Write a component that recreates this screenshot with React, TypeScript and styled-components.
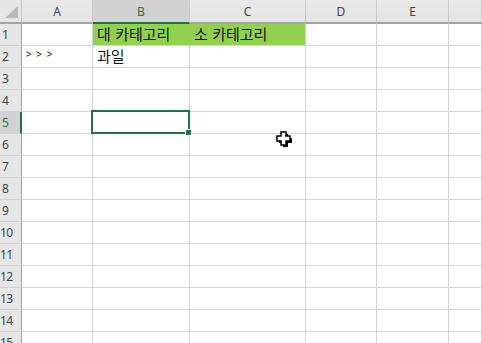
import { styled, createGlobalStyle, css } from 'styled-components'

const GlobalStyle = createGlobalStyle`
  html, body {
    margin: 0;
    padding: 0;
    background: #ffffff;
    overflow: hidden;
  }
`

const ROWS = 15
const COLUMNS = ['A', 'B', 'C', 'D', 'E', '']
const ACTIVE_COL = 'B'
const ACTIVE_ROW = 5

const Sheet = styled.div`
  display: grid;
  grid-template-columns: 22px 71px 97px 116px 71px 72px 1fr;
  grid-auto-rows: 22px;
  grid-template-rows: 24px;
  width: 482px;
  height: 343px;
  overflow: hidden;
  position: relative;
  font-family: 'Noto Sans', 'Noto Sans CJK KR', sans-serif;
  background: #ffffff;
`

const Corner = styled.div`
  background: #e6e6e6;
  border-right: 1px solid #c6c6c6;
  border-bottom: 2px solid #a3a3a3;
  box-sizing: border-box;
  position: relative;

  &::after {
    content: '';
    position: absolute;
    right: 3px;
    bottom: 4px;
    width: 0;
    height: 0;
    border-left: 13px solid transparent;
    border-bottom: 12px solid #b8b8b8;
  }
`

const ColHead = styled.div<{ $active?: boolean }>`
  display: flex;
  align-items: center;
  justify-content: center;
  box-sizing: border-box;
  font-size: 12px;
  color: #444444;
  background: linear-gradient(#e9e9e9, #e4e4e4);
  border-right: 1px solid #cacaca;
  border-bottom: 2px solid #a3a3a3;
  padding-top: 1px;

  ${({ $active }) =>
    $active &&
    css`
      background: #d2d2d2;
      color: #217346;
      border-bottom-color: #217346;
    `}
`

const RowHead = styled.div<{ $active?: boolean; $wide?: boolean }>`
  display: flex;
  align-items: center;
  box-sizing: border-box;
  padding-left: ${({ $wide }) => ($wide ? '0' : '2px')};
  font-size: 12px;
  letter-spacing: ${({ $wide }) => ($wide ? '-0.6px' : '0')};
  color: #444444;
  background: #e6e6e6;
  border-right: 1px solid #a3a3a3;
  border-bottom: 1px solid #d0d0d0;

  ${({ $active }) =>
    $active &&
    css`
      background: #d2d2d2;
      color: #217346;
      border-right: 2px solid #217346;
    `}
`

const Cell = styled.div<{ $fill?: boolean; $joinRight?: boolean; $small?: boolean }>`
  position: relative;
  display: flex;
  align-items: flex-end;
  box-sizing: border-box;
  padding: 0 4px 1px;
  white-space: pre;
  border-right: 1px solid #d4d4d4;
  border-bottom: 1px solid #d4d4d4;
  font-family: 'Noto Sans CJK KR', 'Noto Sans', sans-serif;
  font-size: 15px;
  line-height: 20px;
  word-spacing: 1px;
  color: #111111;
  overflow: visible;

  ${({ $fill }) =>
    $fill &&
    css`
      background: #92d050;
    `}

  ${({ $joinRight }) =>
    $joinRight &&
    css`
      border-right-color: #92d050;
    `}

  ${({ $small }) =>
    $small &&
    css`
      font-family: 'Noto Sans', sans-serif;
      font-size: 10px;
      word-spacing: 2px;
      padding-bottom: 3px;
    `}
`

const Selection = styled.div`
  position: absolute;
  left: -2px;
  top: -2px;
  right: -1px;
  bottom: -1px;
  border: 2px solid #217346;
  pointer-events: none;
  z-index: 2;

  &::after {
    content: '';
    position: absolute;
    right: -4px;
    bottom: -4px;
    width: 5px;
    height: 5px;
    background: #217346;
    border: 1px solid #ffffff;
  }
`

const Cursor = styled.svg`
  position: absolute;
  left: 276px;
  top: 131px;
  z-index: 3;
`

const content: Record<string, { text: string; fill?: boolean; joinRight?: boolean; small?: boolean }> = {
  B1: { text: '대 카테고리', fill: true, joinRight: true },
  C1: { text: '소 카테고리', fill: true },
  A2: { text: '> > >', small: true },
  B2: { text: '과일' },
}

export default function App() {
  const rows = Array.from({ length: ROWS }, (_, i) => i + 1)

  return (
    <>
      <GlobalStyle />
      <Sheet>
        <Corner />
        {COLUMNS.map((c, i) => (
          <ColHead key={'h' + i} $active={c === ACTIVE_COL}>
            {c}
          </ColHead>
        ))}

        {rows.map((r) => (
          <>
            <RowHead key={'r' + r} $active={r === ACTIVE_ROW} $wide={r >= 10}>
              {r}
            </RowHead>
            {COLUMNS.map((c, i) => {
              const data = content[c + r]
              return (
                <Cell
                  key={r + '-' + i}
                  $fill={data?.fill}
                  $joinRight={data?.joinRight}
                  $small={data?.small}
                >
                  {data?.text}
                  {c === ACTIVE_COL && r === ACTIVE_ROW && <Selection />}
                </Cell>
              )
            })}
          </>
        ))}

        <Cursor width="17" height="17" viewBox="0 0 17 17">
          <path d="M6 2h5v4h4v5h-4v4H6v-4H2V6h4z" fill="#000" transform="translate(1 1)" />
          <path d="M5 1h5v4h4v5h-4v4H5v-4H1V5h4z" fill="#fff" stroke="#000" strokeWidth="1.5" />
        </Cursor>
      </Sheet>
    </>
  )
}
